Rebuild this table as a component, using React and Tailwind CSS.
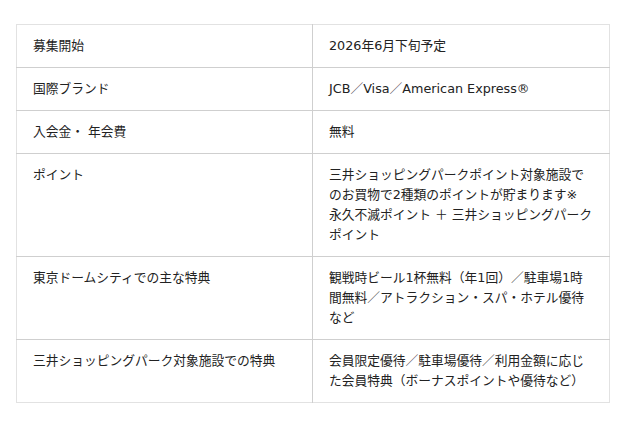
import React from "react";

const rows = [
  { label: "募集開始", value: ["2026年6月下旬予定"] },
  { label: "国際ブランド", value: ["JCB／Visa／American Express®"] },
  { label: "入会金・ 年会費", value: ["無料"] },
  {
    label: "ポイント",
    value: [
      "三井ショッピングパークポイント対象施設で",
      "のお買物で2種類のポイントが貯まります※",
      "永久不滅ポイント ＋ 三井ショッピングパーク",
      "ポイント",
    ],
  },
  {
    label: "東京ドームシティでの主な特典",
    value: [
      "観戦時ビール1杯無料（年1回）／駐車場1時",
      "間無料／アトラクション・スパ・ホテル優待",
      "など",
    ],
  },
  {
    label: "三井ショッピングパーク対象施設での特典",
    value: [
      "会員限定優待／駐車場優待／利用金額に応じ",
      "た会員特典（ボーナスポイントや優待など）",
    ],
  },
];

const App = () => {
  return (
    <div
      className="min-h-screen bg-white pt-6 pl-4 text-[12.75px] leading-5 text-[#222]"
      style={{ fontFamily: '"DejaVu Sans", "Noto Sans CJK JP", sans-serif' }}
    >
      {/* Table */}
      <table className="w-[594px] table-fixed border-collapse border border-[#e2e2e2]">
        <colgroup>
          <col className="w-[296px]" />
          <col />
        </colgroup>
        <tbody>
          {rows.map((row, i) => (
            <tr key={i} className="border-t border-[#cfcfcf] first:border-t-[#e2e2e2]">
              <td className="align-top border-r border-[#cfcfcf] px-4 py-[11px]">
                {row.label}
              </td>
              <td className="align-top px-4 py-[11px] whitespace-nowrap">
                {row.value.map((line, j) => (
                  <div key={j}>{line}</div>
                ))}
              </td>
            </tr>
          ))}
        </tbody>
      </table>
    </div>
  );
};

export default App;
